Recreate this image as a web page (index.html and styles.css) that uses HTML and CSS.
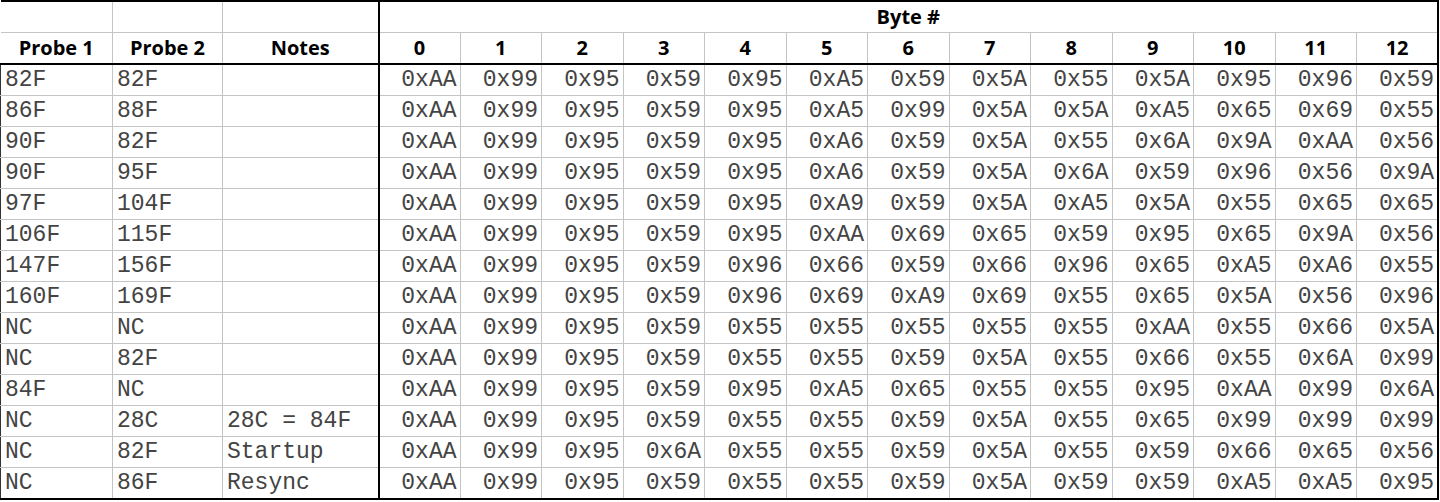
FILE: index.html
```html
<!DOCTYPE html>
<html>
<head>
<meta charset="utf-8">
<link rel="stylesheet" href="styles.css">
</head>
<body>
<table class="sheet">
  <colgroup>
    <col class="c-probe1"><col class="c-probe2"><col class="c-notes">
    <col class="c-byte"><col class="c-byte"><col class="c-byte"><col class="c-byte"><col class="c-byte"><col class="c-byte"><col class="c-byte"><col class="c-byte"><col class="c-byte"><col class="c-byte"><col class="c-byte"><col class="c-byte"><col class="c-byte">
  </colgroup>
  <thead>
    <tr class="hr1">
      <th class="lead"></th><th></th><th class="sep"></th>
      <th colspan="13" class="bytes">Byte #</th>
    </tr>
    <tr class="hr2">
      <th class="lead">Probe 1</th><th>Probe 2</th><th class="sep">Notes</th>
      <th>0</th><th>1</th><th>2</th><th>3</th><th>4</th><th>5</th><th>6</th><th>7</th><th>8</th><th>9</th><th>10</th><th>11</th><th>12</th>
    </tr>
  </thead>
  <tbody id="rows">
    <tr><td class="lead">82F</td><td>82F</td><td class="sep"></td><td>0xAA</td><td>0x99</td><td>0x95</td><td>0x59</td><td>0x95</td><td>0xA5</td><td>0x59</td><td>0x5A</td><td>0x55</td><td>0x5A</td><td>0x95</td><td>0x96</td><td>0x59</td></tr>
    <tr><td class="lead">86F</td><td>88F</td><td class="sep"></td><td>0xAA</td><td>0x99</td><td>0x95</td><td>0x59</td><td>0x95</td><td>0xA5</td><td>0x99</td><td>0x5A</td><td>0x5A</td><td>0xA5</td><td>0x65</td><td>0x69</td><td>0x55</td></tr>
    <tr><td class="lead">90F</td><td>82F</td><td class="sep"></td><td>0xAA</td><td>0x99</td><td>0x95</td><td>0x59</td><td>0x95</td><td>0xA6</td><td>0x59</td><td>0x5A</td><td>0x55</td><td>0x6A</td><td>0x9A</td><td>0xAA</td><td>0x56</td></tr>
    <tr><td class="lead">90F</td><td>95F</td><td class="sep"></td><td>0xAA</td><td>0x99</td><td>0x95</td><td>0x59</td><td>0x95</td><td>0xA6</td><td>0x59</td><td>0x5A</td><td>0x6A</td><td>0x59</td><td>0x96</td><td>0x56</td><td>0x9A</td></tr>
    <tr><td class="lead">97F</td><td>104F</td><td class="sep"></td><td>0xAA</td><td>0x99</td><td>0x95</td><td>0x59</td><td>0x95</td><td>0xA9</td><td>0x59</td><td>0x5A</td><td>0xA5</td><td>0x5A</td><td>0x55</td><td>0x65</td><td>0x65</td></tr>
    <tr><td class="lead">106F</td><td>115F</td><td class="sep"></td><td>0xAA</td><td>0x99</td><td>0x95</td><td>0x59</td><td>0x95</td><td>0xAA</td><td>0x69</td><td>0x65</td><td>0x59</td><td>0x95</td><td>0x65</td><td>0x9A</td><td>0x56</td></tr>
    <tr><td class="lead">147F</td><td>156F</td><td class="sep"></td><td>0xAA</td><td>0x99</td><td>0x95</td><td>0x59</td><td>0x96</td><td>0x66</td><td>0x59</td><td>0x66</td><td>0x96</td><td>0x65</td><td>0xA5</td><td>0xA6</td><td>0x55</td></tr>
    <tr><td class="lead">160F</td><td>169F</td><td class="sep"></td><td>0xAA</td><td>0x99</td><td>0x95</td><td>0x59</td><td>0x96</td><td>0x69</td><td>0xA9</td><td>0x69</td><td>0x55</td><td>0x65</td><td>0x5A</td><td>0x56</td><td>0x96</td></tr>
    <tr><td class="lead">NC</td><td>NC</td><td class="sep"></td><td>0xAA</td><td>0x99</td><td>0x95</td><td>0x59</td><td>0x55</td><td>0x55</td><td>0x55</td><td>0x55</td><td>0x55</td><td>0xAA</td><td>0x55</td><td>0x66</td><td>0x5A</td></tr>
    <tr><td class="lead">NC</td><td>82F</td><td class="sep"></td><td>0xAA</td><td>0x99</td><td>0x95</td><td>0x59</td><td>0x55</td><td>0x55</td><td>0x59</td><td>0x5A</td><td>0x55</td><td>0x66</td><td>0x55</td><td>0x6A</td><td>0x99</td></tr>
    <tr><td class="lead">84F</td><td>NC</td><td class="sep"></td><td>0xAA</td><td>0x99</td><td>0x95</td><td>0x59</td><td>0x95</td><td>0xA5</td><td>0x65</td><td>0x55</td><td>0x55</td><td>0x95</td><td>0xAA</td><td>0x99</td><td>0x6A</td></tr>
    <tr><td class="lead">NC</td><td>28C</td><td class="sep">28C = 84F</td><td>0xAA</td><td>0x99</td><td>0x95</td><td>0x59</td><td>0x55</td><td>0x55</td><td>0x59</td><td>0x5A</td><td>0x55</td><td>0x65</td><td>0x99</td><td>0x99</td><td>0x99</td></tr>
    <tr><td class="lead">NC</td><td>82F</td><td class="sep">Startup</td><td>0xAA</td><td>0x99</td><td>0x95</td><td>0x6A</td><td>0x55</td><td>0x55</td><td>0x59</td><td>0x5A</td><td>0x55</td><td>0x59</td><td>0x66</td><td>0x65</td><td>0x56</td></tr>
    <tr><td class="lead">NC</td><td>86F</td><td class="sep">Resync</td><td>0xAA</td><td>0x99</td><td>0x95</td><td>0x59</td><td>0x55</td><td>0x55</td><td>0x59</td><td>0x5A</td><td>0x59</td><td>0x59</td><td>0xA5</td><td>0xA5</td><td>0x95</td></tr>
  </tbody>
</table>
</body>
</html>
```
FILE: styles.css
```css
html, body {
  margin: 0;
  padding: 0;
  background: #ffffff;
}

.sheet {
  border-collapse: collapse;
  table-layout: fixed;
  width: 1439px;
  border-top: 2px solid #000;
  border-right: 2px solid #000;
  border-bottom: 2px solid #000;
}

.c-probe1 { width: 112px; }
.c-probe2 { width: 110px; }
.c-notes { width: 156px; }
.c-byte { width: 81.5px; }

.sheet th,
.sheet td {
  border: 1px solid #c4c4c4;
  padding: 0 3px;
  overflow: hidden;
  white-space: nowrap;
}

.sheet th {
  font-family: "Open Sans", "DejaVu Sans", sans-serif;
  font-weight: 700;
  font-size: 20px;
  color: #000;
  text-align: center;
  height: 30px;
  line-height: 30px;
}

.sheet thead .lead { border-left: none; }

.hr1 th { border-top: 2px solid #000; height: 30px; }
.hr2 th { border-bottom: 2px solid #000; }

.sheet .sep { border-right: 2px solid #000; }

.sheet td {
  font-family: "Courier New", "Nimbus Mono PS", "FreeMono", "Liberation Mono", monospace;
  font-size: 23px;
  color: #444;
  text-align: right;
  height: 30px;
  line-height: 30px;
}

.sheet td.lead,
.sheet td:nth-child(2),
.sheet td.sep {
  text-align: left;
  padding-left: 4px;
}

.sheet td.lead { border-left: 1px solid #333; }
```
